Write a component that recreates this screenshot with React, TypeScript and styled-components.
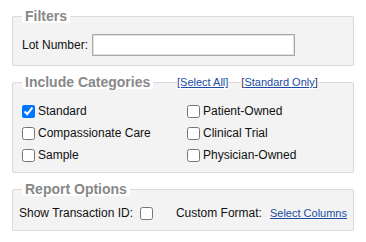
import React from "react";
import styled, { createGlobalStyle } from "styled-components";

const GlobalStyle = createGlobalStyle`
    body {
        margin: 0;
        background: #ffffff;
        font-family: "Liberation Sans", Arial, sans-serif;
        font-size: 12px;
        color: #111111;
    }
`;

const categories = [
    { id: "standard", label: "Standard", checked: true },
    { id: "patient", label: "Patient-Owned" },
    { id: "compassionate", label: "Compassionate Care" },
    { id: "clinical", label: "Clinical Trial" },
    { id: "sample", label: "Sample" },
    { id: "physician", label: "Physician-Owned" },
];

const App = () => {
    return (
        <Page>
            <GlobalStyle />
            <Box>
                <Title>Filters</Title>
                <LotRow>
                    <label htmlFor="lot">Lot Number:</label>
                    <TextInput id="lot" type="text" />
                </LotRow>
            </Box>

            <Box $pb={6}>
                <Title>Include Categories</Title>
                <TitleLinks>
                    <Pill><A href="#">[Select All]</A></Pill>
                    <Pill>
                        <Bracket>[</Bracket><A href="#">Standard Only</A><Bracket>]</Bracket>
                    </Pill>
                </TitleLinks>
                <CategoryGrid>
                    {categories.map(item => (
                        <Check key={item.id}>
                            <Box13 type="checkbox" defaultChecked={item.checked} />
                            <span>{item.label}</span>
                        </Check>
                    ))}
                </CategoryGrid>
            </Box>

            <Box $pl={6} $pt={6} $pb={6}>
                <Title $shift={3}>Report Options</Title>
                <OptionsRow>
                    <Option>
                        <span>Show Transaction ID:</span>
                        <Box13 type="checkbox" />
                    </Option>
                    <Option $gap={8}>
                        <span>Custom Format:</span>
                        <A href="#">Select Columns</A>
                    </Option>
                </OptionsRow>
            </Box>
        </Page>
    );
};

const Page = styled.div`
    display: flex;
    flex-direction: column;
    gap: 9px;
    width: 342px;
    padding: 9px 0 0 12px;
`;

const Box = styled.fieldset<{ $pl?: number; $pt?: number; $pb?: number }>`
    position: relative;
    margin: 0;
    padding: ${p => p.$pt ?? 11}px 6px ${p => p.$pb ?? 9}px ${p => p.$pl ?? 9}px;
    border: 1px solid #dadada;
    border-radius: 2px;
    background: #f3f3f3;
    min-width: 0;
`;

const Title = styled.legend<{ $shift?: number }>`
    margin-left: ${p => p.$shift ?? 0}px;
    padding: 0 3px;
    background: #ffffff;
    border-radius: 3px;
    font-size: 14px;
    line-height: 14px;
    font-weight: bold;
    color: #888888;
`;

const TitleLinks = styled.div`
    position: absolute;
    top: -13px;
    left: 164px;
    display: flex;
    gap: 13px;
    font-size: 11px;
    line-height: 13px;
`;

const Pill = styled.span`
    background: #ffffff;
`;

const Bracket = styled.span`
    color: #3b1f4f;
`;

const A = styled.a`
    color: #1a4ca3;
    text-decoration: underline;
    font-size: 11px;
`;

const LotRow = styled.div`
    display: flex;
    align-items: center;
    gap: 4px;
`;

const TextInput = styled.input`
    box-sizing: border-box;
    width: 203px;
    height: 22px;
    margin: 0;
    border: 1px solid #a9a9a9;
    box-shadow: inset 0 0 0 1px #e2e2e2;
    background: #ffffff;
    font: inherit;
`;

const CategoryGrid = styled.div`
    display: grid;
    grid-template-columns: 165px 1fr;
    grid-auto-rows: 22px;
`;

const Check = styled.label`
    display: flex;
    align-items: center;
    gap: 3px;
`;

const Box13 = styled.input`
    width: 13px;
    height: 13px;
    margin: 0;
`;

const OptionsRow = styled.div`
    display: flex;
    justify-content: space-between;
    align-items: center;
    height: 22px;
`;

const Option = styled.div<{ $gap?: number }>`
    display: flex;
    align-items: center;
    gap: ${p => p.$gap ?? 7}px;
`;

export default App;
